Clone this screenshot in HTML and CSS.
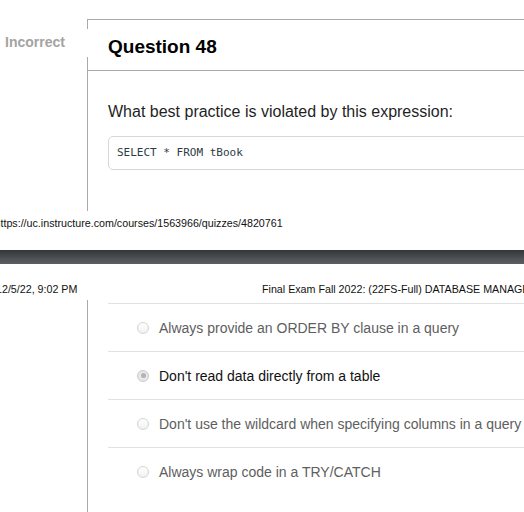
FILE: index.html
```html
<!DOCTYPE html>
<html lang="en">
<head>
<meta charset="utf-8">
<title>Question 48</title>
<link rel="stylesheet" href="styles.css">
</head>
<body>
  <section class="sheet sheet-top">
    <div class="question">
      <span class="q-label">Incorrect</span>
      <div class="q-header">Question 48</div>
      <div class="q-body">
        <p class="q-text">What best practice is violated by this expression:</p>
        <div class="code">SELECT * FROM tBook</div>
      </div>
    </div>
    <div class="print-footer">https://uc.instructure.com/courses/1563966/quizzes/4820761</div>
  </section>
  <div class="page-break"></div>
  <section class="sheet sheet-bottom">
    <div class="print-header">
      <span class="print-date">12/5/22, 9:02 PM</span>
      <span class="print-title">Final Exam Fall 2022: (22FS-Full) DATABASE MANAGEMENT</span>
    </div>
    <div class="question question-cont">
      <ul class="answers">
        <li class="answer"><span class="radio"></span><span class="answer-text">Always provide an ORDER BY clause in a query</span></li>
        <li class="answer selected"><span class="radio"></span><span class="answer-text">Don't read data directly from a table</span></li>
        <li class="answer"><span class="radio"></span><span class="answer-text">Don't use the wildcard when specifying columns in a query</span></li>
        <li class="answer"><span class="radio"></span><span class="answer-text">Always wrap code in a TRY/CATCH</span></li>
      </ul>
    </div>
  </section>
</body>
</html>
```
FILE: styles.css
```css
html, body {
  margin: 0;
  padding: 0;
  overflow: hidden;
  background: #fff;
}
body {
  width: 524px;
  height: 512px;
  font-family: "Liberation Sans", Arial, sans-serif;
  color: #1f1f1f;
}

.sheet-top {
  height: 250px;
  padding-top: 19px;
  box-sizing: border-box;
}

.question {
  position: relative;
  margin-left: 87px;
  width: 520px;
  border-left: 1px solid #a9a9a9;
}
.sheet-top .question {
  height: 192px;
  box-sizing: border-box;
  border-top: 1px solid #a9a9a9;
}

.q-label {
  position: absolute;
  left: -88px;
  top: 9px;
  width: 84px;
  height: 28px;
  padding-left: 5px;
  background: #fff;
  font-weight: bold;
  font-size: 14px;
  line-height: 26px;
  color: #a3a3a3;
}

.q-header {
  height: 48px;
  padding-top: 2px;
  padding-left: 20px;
  border-bottom: 1px solid #a9a9a9;
  font-weight: bold;
  font-size: 19px;
  line-height: 50px;
  color: #000;
}

.q-body {
  padding: 32px 0 0 20px;
}
.q-text {
  margin: 0;
  font-size: 16px;
  line-height: 18px;
  color: #1f1f1f;
}
.code {
  margin-top: 15px;
  height: 34px;
  box-sizing: border-box;
  border: 1px solid #d3d8dc;
  border-radius: 5px;
  padding-left: 8px;
  font-family: "DejaVu Sans Mono", "Liberation Mono", monospace;
  font-size: 11px;
  line-height: 32px;
  color: #2d3b45;
  white-space: pre;
}

.print-footer {
  margin-top: 6px;
  margin-left: -5.5px;
  font-size: 10.7px;
  line-height: 13px;
  color: #111;
  white-space: nowrap;
}

.page-break {
  height: 14px;
  background: linear-gradient(#333537, #4d5154 60%, #5a5e62);
}

.print-header {
  display: flex;
  margin-top: 19px;
  font-size: 10.7px;
  line-height: 13px;
  color: #111;
  white-space: nowrap;
}
.print-date {
  flex: 0 0 266px;
  margin-left: -4px;
}
.print-title {
  flex: none;
}

.question-cont {
  margin-top: 4px;
  height: 220px;
}

.answers {
  list-style: none;
  margin: 0;
  padding: 3px 0 0 20px;
}
.answer {
  display: flex;
  align-items: center;
  height: 47px;
  padding-left: 29px;
  border-top: 1px solid #e2e2e2;
  font-size: 14px;
  color: #5e5e5e;
  white-space: nowrap;
}
.answer.selected {
  color: #111;
}
.answer-text {
  margin-left: 10px;
}

.radio {
  position: relative;
  flex: none;
  width: 12px;
  height: 12px;
  box-sizing: border-box;
  border: 1px solid #d4d4d4;
  border-radius: 50%;
  background: linear-gradient(#ffffff, #f1f1f1);
}
.answer.selected .radio {
  background: #e8e8e8;
  border-color: #c9c9c9;
}
.answer.selected .radio::after {
  content: "";
  position: absolute;
  left: 2.5px;
  top: 2.5px;
  width: 5px;
  height: 5px;
  border-radius: 50%;
  background: #b3b3b3;
}
```
